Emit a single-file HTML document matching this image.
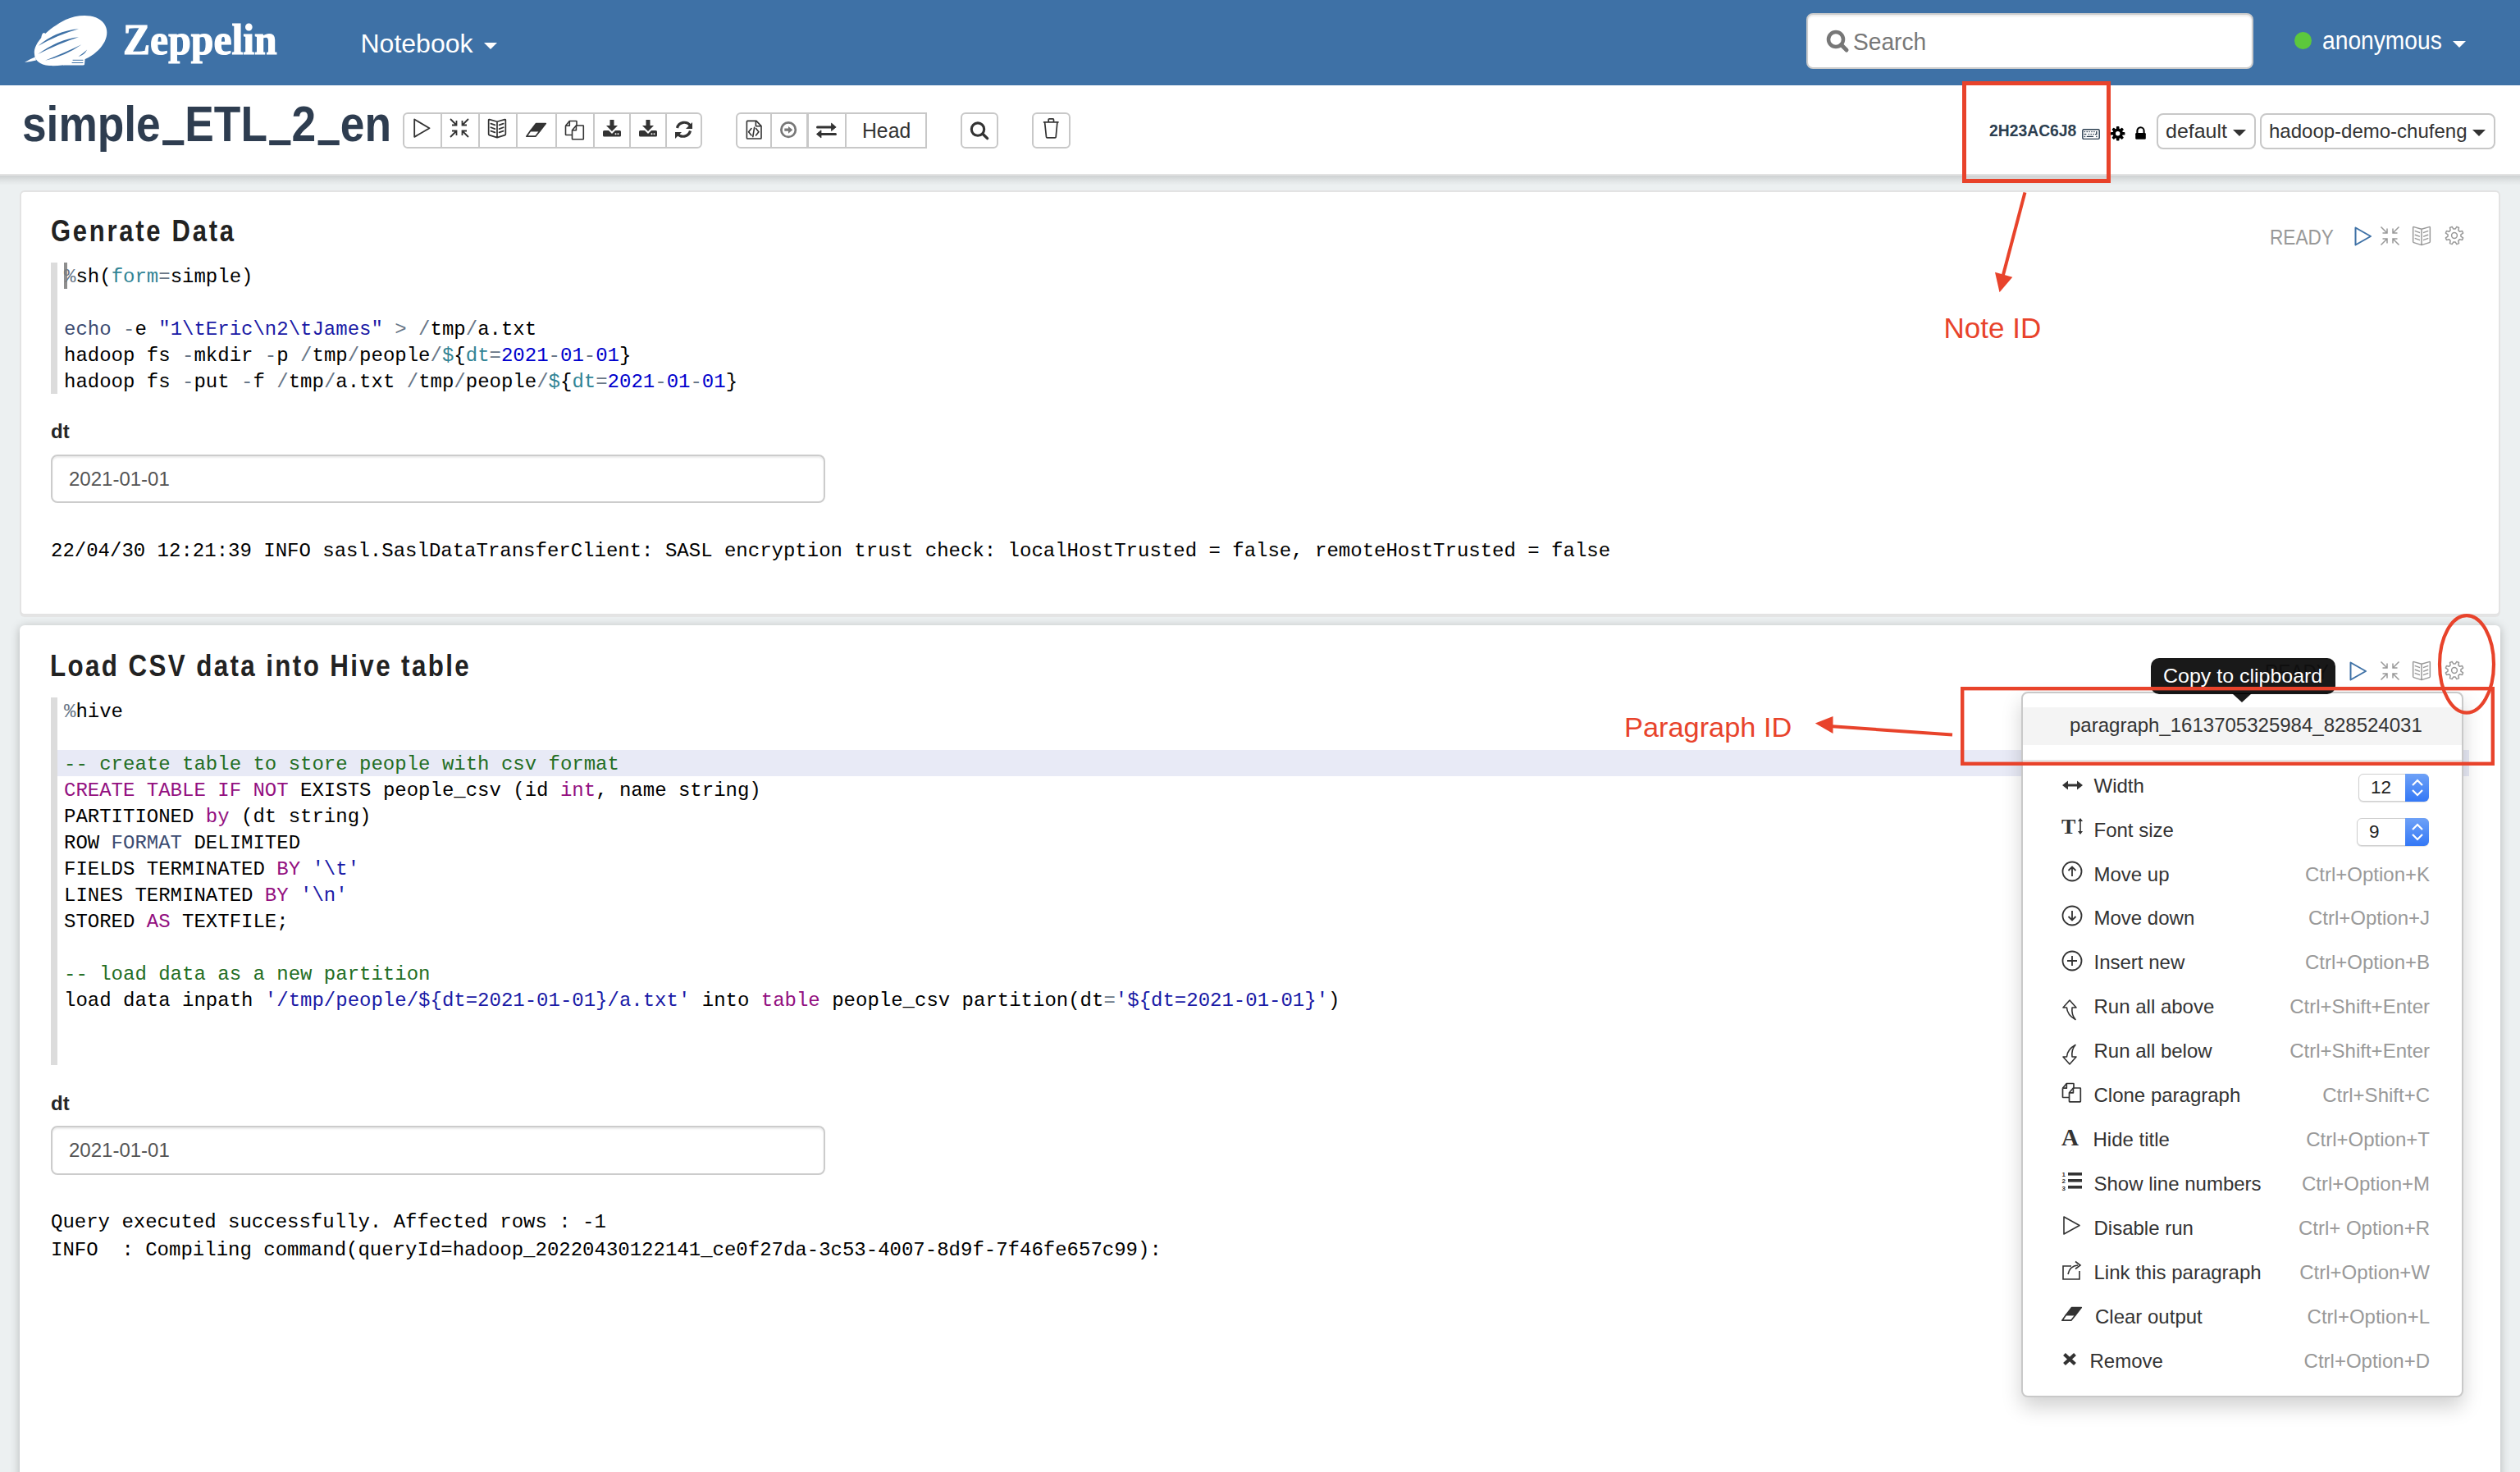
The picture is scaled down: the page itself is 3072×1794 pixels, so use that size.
<!DOCTYPE html>
<html><head><meta charset="utf-8"><title>Zeppelin</title>
<style>
html,body{margin:0;padding:0;}
body{width:3072px;height:1794px;overflow:hidden;position:relative;background:#ecf0f1;font-family:"Liberation Sans",sans-serif;}
.t{position:absolute;white-space:pre;}
.u{color:transparent;position:relative;}
.u::after{content:'';position:absolute;left:3px;right:1px;top:54px;height:6px;background:#2e3d50;}
svg{overflow:visible;}
</style></head><body>
<div style="position:absolute;left:0px;top:0px;width:3072px;height:104px;background:#3e71a6;"></div>
<svg style="position:absolute;left:0px;top:0px;" width="140" height="104" viewBox="0 0 140 104">
<g fill="#fff">
<path d="M42 66 C40 52 60 34 80 24 C95 17 118 16 127 29 C136 42 126 60 108 70 C95 77 75 81 60 80 C48 79 42 73 42 66 Z"/>
<path d="M30 76 Q36 72 43 69.5 L44 73.5 Q37 75 30 76 Z"/>
<path d="M50.3 46.5 Q50.5 41.5 53 40 Q55.5 40 56 42 Z"/>
<path d="M76 77 Q84 74 91 70.5 L102 70.3 Q104 70.5 103.5 73 L103 78.5 Q103 79.5 101 79.5 L77 79.5 Z"/>
</g>
<g fill="#3e71a6">
<path d="M46.5 56 Q67.5 37.6 96 35.2 Q70.5 42.2 46.5 56 Z"/>
<path d="M46.3 66 Q71.5 47.6 96 45.2 Q73.5 52.2 46.3 66 Z"/>
<path d="M55 73.8 Q79.5 64 99.5 54.3 Q79.5 68.5 55 73.8 Z"/>
<path d="M95.5 69 Q103.5 63.2 106.2 60.5 Q102.8 67.3 95.5 69 Z"/>
</g>
<g fill="none" stroke="#3e71a6" stroke-linecap="round">
<path d="M89 73.3 L101 73.3 M88 76.5 L101 76.5" stroke-width="1"/>
</g></svg>
<div class="t" style="left:150.0px;top:22.5px;font-size:52px;line-height:52px;color:#fff;font-family:'Liberation Serif', serif;font-weight:700;transform:scaleX(0.955);transform-origin:0 0;-webkit-text-stroke:1.2px #fff;">Zeppelin</div>
<div class="t" style="left:439.5px;top:37.4px;font-size:32px;line-height:32px;color:#fff;">Notebook</div>
<svg style="position:absolute;left:590px;top:52px;" width="16" height="8" viewBox="0 0 16 8"><path d="M0 0 H16 L8 8 Z" fill="#fff"/></svg>
<div style="position:absolute;left:2202px;top:16px;width:545px;height:68px;background:#fff;border:2px solid #ccc;box-sizing:border-box;border-radius:8px;box-shadow:inset 0 2px 2px rgba(0,0,0,.08);"></div>
<svg style="position:absolute;left:2226px;top:36px;" width="30" height="30" viewBox="0 0 30 30"><circle cx="12" cy="12" r="9" fill="none" stroke="#777" stroke-width="4.5"/><path d="M18.5 18.5 L25 25" stroke="#777" stroke-width="5" stroke-linecap="round"/></svg>
<div class="t" style="left:2259.0px;top:36.9px;font-size:29px;line-height:29px;color:#777;transform:scaleX(0.97);transform-origin:0 0;">Search</div>
<div style="position:absolute;left:2797px;top:39px;width:21px;height:21px;background:#5cc83c;border-radius:50%;"></div>
<div class="t" style="left:2831.0px;top:33.8px;font-size:31px;line-height:31px;color:#fff;transform:scaleX(0.91);transform-origin:0 0;">anonymous</div>
<svg style="position:absolute;left:2990px;top:50px;" width="16" height="8" viewBox="0 0 16 8"><path d="M0 0 H16 L8 8 Z" fill="#fff"/></svg>
<div style="position:absolute;left:0px;top:104px;width:3072px;height:108px;background:#fff;"></div>
<div style="position:absolute;left:0px;top:212px;width:3072px;height:2px;background:#e3e3e3;"></div>
<div style="position:absolute;left:0px;top:214px;width:3072px;height:12px;background:linear-gradient(rgba(0,0,0,.13),rgba(0,0,0,.04) 60%,rgba(0,0,0,0));"></div>
<div class="t" style="left:27.0px;top:120.9px;font-size:61px;line-height:61px;color:#2e3d50;font-weight:700;transform:scaleX(0.873);transform-origin:0 0;">simple<span class="u">_</span>ETL<span class="u">_</span>2<span class="u">_</span>en</div>
<div style="position:absolute;left:491px;top:137px;width:365px;height:44px;border:2px solid #c8c8c8;box-sizing:border-box;background:#fff;border-radius:6px 6px 6px 6px;"></div>
<div style="position:absolute;left:537px;top:137px;width:2px;height:44px;background:#c8c8c8;"></div>
<div style="position:absolute;left:583px;top:137px;width:2px;height:44px;background:#c8c8c8;"></div>
<div style="position:absolute;left:629px;top:137px;width:2px;height:44px;background:#c8c8c8;"></div>
<div style="position:absolute;left:677px;top:137px;width:2px;height:44px;background:#c8c8c8;"></div>
<div style="position:absolute;left:723px;top:137px;width:2px;height:44px;background:#c8c8c8;"></div>
<div style="position:absolute;left:767px;top:137px;width:2px;height:44px;background:#c8c8c8;"></div>
<div style="position:absolute;left:811px;top:137px;width:2px;height:44px;background:#c8c8c8;"></div>
<svg style="position:absolute;left:500px;top:141px;" width="30" height="32" viewBox="0 0 30 32"><path d="M5.2 4.5 L23.5 15.2 L5.2 25.9 Z" fill="none" stroke="#333" stroke-width="1.8" stroke-linejoin="round"/></svg>
<svg style="position:absolute;left:548px;top:144px;" width="24" height="24" viewBox="0 0 24 24"><g fill="none" stroke="#333" stroke-width="1.8" stroke-linecap="butt" stroke-linejoin="miter"><path d="M1 1 L8.5 8.5 M8.5 3 V8.5 H3"/><path d="M23 1 L15.5 8.5 M15.5 3 V8.5 H21"/><path d="M1 23 L8.5 15.5 M8.5 21 V15.5 H3"/><path d="M23 23 L15.5 15.5 M15.5 21 V15.5 H21"/></g></svg>
<svg style="position:absolute;left:594px;top:144px;" width="24" height="24" viewBox="0 0 24 24"><g fill="none" stroke="#333" stroke-width="1.7" stroke-linejoin="round" stroke-linecap="round"><path d="M12 4.3 L2.7 1.6 Q1.65 1.3 1.65 2.4 V19.6 Q1.65 20.4 2.4 20.6 L12 23.6 L21.6 20.6 Q22.35 20.4 22.35 19.6 V2.4 Q22.35 1.3 21.3 1.6 Z M12 4.3 V23.6"/><path d="M4.3 6.6 L9.4 8.4 M4.3 11.2 L9.4 13.1 M4.3 15.6 L9.4 17.4 M14.6 8.4 L19.7 6.6 M14.6 13.1 L19.7 11.2 M14.6 17.4 L19.7 15.6"/></g></svg>
<svg style="position:absolute;left:641px;top:149px;" width="26" height="19" viewBox="0 0 26 19"><path d="M12.5 1.5 H24.3 L17.3 10.4 H5.6 Z" fill="#333" stroke="#333" stroke-width="1.6" stroke-linejoin="round"/><path d="M5.6 10.4 H17.3 L11.8 17.2 H0.9 Z" fill="none" stroke="#333" stroke-width="1.7" stroke-linejoin="round"/></svg>
<svg style="position:absolute;left:688px;top:146px;" width="25" height="25" viewBox="0 0 25 25"><g fill="none" stroke="#333" stroke-width="1.6" stroke-linejoin="round"><path d="M1.5 7.2 L6.3 1.5 H14.5 Q15 1.5 15 2 V7.8"/><path d="M1.5 7.2 H6.3 V1.5"/><path d="M1.5 7.2 V18 Q1.5 18.5 2 18.5 H9.5"/><path d="M9.5 12.8 L14.4 7 H22.8 Q23.3 7 23.3 7.5 V23.3 Q23.3 23.8 22.8 23.8 H10 Q9.5 23.8 9.5 23.3 Z"/><path d="M9.5 12.8 H14.4 V7"/></g></svg>
<svg style="position:absolute;left:735px;top:146px;" width="22" height="21" viewBox="0 0 22 21"><path d="M8.5 0 H13.5 V7 H18 L11 14 L4 7 H8.5 Z" fill="#333"/><path d="M0 14.5 Q0 13 1.5 13 H7 L11 17 L15 13 H20.5 Q22 13 22 14.5 V19 Q22 20.5 20.5 20.5 H1.5 Q0 20.5 0 19 Z" fill="#333"/><circle cx="15.5" cy="17.3" r="1" fill="#fff"/><circle cx="18.5" cy="17.3" r="1" fill="#fff"/></svg>
<svg style="position:absolute;left:779px;top:146px;" width="22" height="21" viewBox="0 0 22 21"><path d="M8.5 0 H13.5 V7 H18 L11 14 L4 7 H8.5 Z" fill="#333"/><path d="M0 14.5 Q0 13 1.5 13 H7 L11 17 L15 13 H20.5 Q22 13 22 14.5 V19 Q22 20.5 20.5 20.5 H1.5 Q0 20.5 0 19 Z" fill="#333"/><circle cx="15.5" cy="17.3" r="1" fill="#fff"/><circle cx="18.5" cy="17.3" r="1" fill="#fff"/></svg>
<svg style="position:absolute;left:823px;top:147px;" width="21" height="23" viewBox="0 0 21 23"><g fill="none" stroke="#333" stroke-width="3.2"><path d="M2.5 9 A9 9 0 0 1 18.5 6"/><path d="M18.5 12.5 A9 9 0 0 1 2.5 15.5"/></g><path d="M21 2 V10 H13 Z" fill="#333"/><path d="M0 22 V14 H8 Z" fill="#333"/></svg>
<div style="position:absolute;left:897px;top:137px;width:233px;height:44px;border:2px solid #c8c8c8;box-sizing:border-box;background:#fff;border-radius:6px 0 0 6px;"></div>
<div style="position:absolute;left:939px;top:137px;width:2px;height:44px;background:#c8c8c8;"></div>
<div style="position:absolute;left:983px;top:137px;width:3px;height:44px;background:#c8c8c8;"></div>
<div style="position:absolute;left:1030px;top:137px;width:2px;height:44px;background:#c8c8c8;"></div>
<svg style="position:absolute;left:908px;top:145px;" width="22" height="26" viewBox="0 0 22 26"><path d="M2.4 3.3 Q2.4 2.4 3.3 2.4 H14 L20 8.6 V23.2 Q20 24 19.2 24 H3.3 Q2.4 24 2.4 23.2 Z" fill="none" stroke="#333" stroke-width="1.6" stroke-linejoin="round"/><path d="M13.4 2.6 V8.2 Q13.4 8.8 14 8.8 H19.8" fill="none" stroke="#333" stroke-width="1.6"/><path d="M8 11.6 L4.6 15.8 L8 20 M13.5 11.6 L16.9 15.8 L13.5 20 M11.6 10.3 L9.8 21.6" fill="none" stroke="#333" stroke-width="1.6" stroke-linecap="round"/></svg>
<svg style="position:absolute;left:950px;top:147px;" width="24" height="24" viewBox="0 0 24 24"><circle cx="11.1" cy="11.2" r="8.75" fill="none" stroke="#777" stroke-width="2.7"/><path d="M6.3 9.6 H11.4 V12.8 H6.3 Z M11 6.9 L16.3 11.2 L11 15.8 Z" fill="#777"/></svg>
<svg style="position:absolute;left:995px;top:150px;" width="25" height="19" viewBox="0 0 25 19"><path d="M1.5 5.1 H19.5 M23.5 13.5 H5.5" stroke="#333" stroke-width="3" stroke-linecap="round"/><path d="M18.5 0.1 L24.2 4.9 L18.5 9.6 Z" fill="#333" stroke="#333" stroke-width="0.8" stroke-linejoin="round"/><path d="M6 8.8 L0.4 13.4 L6 18 Z" fill="#333" stroke="#333" stroke-width="0.8" stroke-linejoin="round"/></svg>
<div class="t" style="left:1050.5px;top:146.8px;font-size:25px;line-height:25px;color:#333;transform:scaleX(0.99);transform-origin:0 0;">Head</div>
<div style="position:absolute;left:1171px;top:137px;width:46px;height:44px;border:2px solid #c8c8c8;box-sizing:border-box;background:#fff;border-radius:6px;"></div>
<svg style="position:absolute;left:1182px;top:147px;" width="24" height="24" viewBox="0 0 24 24"><circle cx="10" cy="10.6" r="7.7" fill="none" stroke="#333" stroke-width="3.1"/><path d="M16 16.2 L21.6 21.6" stroke="#333" stroke-width="3.4" stroke-linecap="round"/></svg>
<div style="position:absolute;left:1258px;top:137px;width:47px;height:44px;border:2px solid #c8c8c8;box-sizing:border-box;background:#fff;border-radius:6px;"></div>
<svg style="position:absolute;left:1270px;top:143px;" width="22" height="28" viewBox="0 0 22 28"><g fill="none" stroke="#333" stroke-width="1.7" stroke-linejoin="round"><path d="M1.9 5.9 H20.6"/><path d="M8.2 5.9 V2.9 Q8.2 1.9 9.2 1.9 H13.5 Q14.5 1.9 14.5 2.9 V5.9"/><path d="M3.6 5.9 L5.5 23.9 Q5.6 24.9 6.6 24.9 H16.1 Q17.1 24.9 17.2 23.9 L18.9 5.9"/></g></svg>
<div class="t" style="left:2425.0px;top:148.2px;font-size:21px;line-height:21px;color:#2c3e50;font-weight:700;transform:scaleX(0.92);transform-origin:0 0;">2H23AC6J8</div>
<svg style="position:absolute;left:2538px;top:157px;" width="22" height="13" viewBox="0 0 22 13"><rect x="0.8" y="0.8" width="20.4" height="11.6" rx="1.4" fill="none" stroke="#2c3e50" stroke-width="1.4"/><g fill="#2c3e50"><rect x="2.6" y="2.9" width="1.5" height="1.3"/><rect x="5.5" y="2.9" width="1.5" height="1.3"/><rect x="8.4" y="2.9" width="1.4" height="1.3"/><rect x="11.3" y="2.9" width="1.4" height="1.3"/><rect x="14.2" y="2.9" width="1.4" height="1.3"/><rect x="2.6" y="5.9" width="2.8" height="1.3"/><rect x="7.7" y="5.9" width="1.4" height="1.3"/><rect x="10.5" y="5.9" width="1.4" height="1.3"/><rect x="13.3" y="5.9" width="1.5" height="1.3"/><path d="M17.1 2.9 H18.5 V7.2 H15.9 V5.9 H17.1 Z"/><rect x="2.6" y="8.8" width="1.6" height="1.3"/><rect x="5.7" y="8.8" width="8.4" height="1.3" rx="0.6"/><rect x="17.1" y="8.8" width="1.4" height="1.3"/></g></svg>
<svg style="position:absolute;left:2573px;top:154px;" width="18" height="18" viewBox="0 0 18 18"><g transform="translate(8.7 8.8)"><circle r="6.2" fill="#000"/><rect x="-1.8" y="-8.7" width="3.6" height="4.5" rx="0.9" fill="#000" transform="rotate(0)"/><rect x="-1.8" y="-8.7" width="3.6" height="4.5" rx="0.9" fill="#000" transform="rotate(45)"/><rect x="-1.8" y="-8.7" width="3.6" height="4.5" rx="0.9" fill="#000" transform="rotate(90)"/><rect x="-1.8" y="-8.7" width="3.6" height="4.5" rx="0.9" fill="#000" transform="rotate(135)"/><rect x="-1.8" y="-8.7" width="3.6" height="4.5" rx="0.9" fill="#000" transform="rotate(180)"/><rect x="-1.8" y="-8.7" width="3.6" height="4.5" rx="0.9" fill="#000" transform="rotate(225)"/><rect x="-1.8" y="-8.7" width="3.6" height="4.5" rx="0.9" fill="#000" transform="rotate(270)"/><rect x="-1.8" y="-8.7" width="3.6" height="4.5" rx="0.9" fill="#000" transform="rotate(315)"/><circle r="2.7" fill="#fff"/></g></svg>
<svg style="position:absolute;left:2603px;top:154px;" width="14" height="16" viewBox="0 0 14 16"><path d="M2.4 8.5 V5.4 A4.1 4.1 0 0 1 10.6 5.4 V8.5" fill="none" stroke="#000" stroke-width="2.1"/><rect x="0.2" y="8" width="12.6" height="7.7" rx="1.2" fill="#000"/></svg>
<div style="position:absolute;left:2629px;top:138px;width:121px;height:44px;border:2px solid #c8c8c8;box-sizing:border-box;border-radius:8px;"></div>
<div class="t" style="left:2640.0px;top:148.2px;font-size:24px;line-height:24px;color:#333;transform:scaleX(1.04);transform-origin:0 0;">default</div>
<svg style="position:absolute;left:2722px;top:158px;" width="16" height="8" viewBox="0 0 16 8"><path d="M0 0 H16 L8 8 Z" fill="#333"/></svg>
<div style="position:absolute;left:2755px;top:138px;width:287px;height:44px;border:2px solid #c8c8c8;box-sizing:border-box;border-radius:8px;"></div>
<div class="t" style="left:2766.0px;top:147.7px;font-size:24px;line-height:24px;color:#333;">hadoop-demo-chufeng</div>
<svg style="position:absolute;left:3014px;top:158px;" width="16" height="8" viewBox="0 0 16 8"><path d="M0 0 H16 L8 8 Z" fill="#333"/></svg>
<div style="position:absolute;left:24px;top:232px;width:3024px;height:518px;background:#fff;border:2px solid #e3e3e3;box-sizing:border-box;border-radius:6px;box-shadow:0 2px 0 #e4e4e4;"></div>
<div class="t" style="left:61.5px;top:263.8px;font-size:36px;line-height:36px;color:#222;font-weight:700;transform:scaleX(0.86);transform-origin:0 0;letter-spacing:3.2px;">Genrate Data</div>
<div class="t" style="left:2767.0px;top:276.0px;font-size:26px;line-height:26px;color:#999;transform:scaleX(0.87);transform-origin:0 0;">READY</div>
<svg style="position:absolute;left:2868px;top:275px;" width="26" height="26" viewBox="0 0 26 26"><path d="M3.5 2.5 L22 13 L3.5 23.5 Z" fill="none" stroke="#3e71a6" stroke-width="2" stroke-linejoin="round"/></svg>
<svg style="position:absolute;left:2900.5px;top:275px;" width="25" height="25" viewBox="-0.5 -0.5 25 25"><g fill="none" stroke="#999" stroke-width="1.5" stroke-linecap="butt" stroke-linejoin="miter"><path d="M1 1 L8.5 8.5 M8.5 3 V8.5 H3"/><path d="M23 1 L15.5 8.5 M15.5 3 V8.5 H21"/><path d="M1 23 L8.5 15.5 M8.5 21 V15.5 H3"/><path d="M23 23 L15.5 15.5 M15.5 21 V15.5 H21"/></g></svg>
<svg style="position:absolute;left:2940px;top:275px;" width="24" height="24" viewBox="0 0 24 24"><g fill="none" stroke="#999" stroke-width="1.5" stroke-linejoin="round" stroke-linecap="round"><path d="M12 4.3 L2.7 1.6 Q1.65 1.3 1.65 2.4 V19.6 Q1.65 20.4 2.4 20.6 L12 23.6 L21.6 20.6 Q22.35 20.4 22.35 19.6 V2.4 Q22.35 1.3 21.3 1.6 Z M12 4.3 V23.6"/><path d="M4.3 6.6 L9.4 8.4 M4.3 11.2 L9.4 13.1 M4.3 15.6 L9.4 17.4 M14.6 8.4 L19.7 6.6 M14.6 13.1 L19.7 11.2 M14.6 17.4 L19.7 15.6"/></g></svg>
<svg style="position:absolute;left:2980px;top:275px;" width="24" height="24" viewBox="0 0 24 24"><path d="M13.06 4.07 L14.86 1.38 L17.49 2.47 L16.86 5.64 L18.36 7.14 L21.53 6.51 L22.62 9.14 L19.93 10.94 L19.93 13.06 L22.62 14.86 L21.53 17.49 L18.36 16.86 L16.86 18.36 L17.49 21.53 L14.86 22.62 L13.06 19.93 L10.94 19.93 L9.14 22.62 L6.51 21.53 L7.14 18.36 L5.64 16.86 L2.47 17.49 L1.38 14.86 L4.07 13.06 L4.07 10.94 L1.38 9.14 L2.47 6.51 L5.64 7.14 L7.14 5.64 L6.51 2.47 L9.14 1.38 L10.94 4.07 Z" fill="none" stroke="#999" stroke-width="1.5" stroke-linejoin="round"/><circle cx="12" cy="12" r="3.4" fill="none" stroke="#999" stroke-width="1.5"/></svg>
<div style="position:absolute;left:62px;top:320px;width:8px;height:160px;background:#dcdcdc;"></div>
<div class="t" style="left:78.0px;top:325.6px;font-size:24px;line-height:24px;color:#000;font-family:'Liberation Mono', monospace;"><span style="color:#687687">%</span>sh(<span style="color:#318495">form</span><span style="color:#687687">=</span>simple)</div>
<div class="t" style="left:78.0px;top:357.6px;font-size:24px;line-height:24px;color:#000;font-family:'Liberation Mono', monospace;"></div>
<div class="t" style="left:78.0px;top:389.6px;font-size:24px;line-height:24px;color:#000;font-family:'Liberation Mono', monospace;"><span style="color:#3c4c72">echo</span> <span style="color:#687687">-</span>e <span style="color:#1a1aa6">&quot;1\tEric\n2\tJames&quot;</span> <span style="color:#687687">&gt;</span> <span style="color:#687687">/</span>tmp<span style="color:#687687">/</span>a.txt</div>
<div class="t" style="left:78.0px;top:421.6px;font-size:24px;line-height:24px;color:#000;font-family:'Liberation Mono', monospace;">hadoop fs <span style="color:#687687">-</span>mkdir <span style="color:#687687">-</span>p <span style="color:#687687">/</span>tmp<span style="color:#687687">/</span>people<span style="color:#687687">/</span><span style="color:#318495">$</span>{<span style="color:#318495">dt</span><span style="color:#687687">=</span><span style="color:#0000cd">2021</span><span style="color:#687687">-</span><span style="color:#0000cd">01</span><span style="color:#687687">-</span><span style="color:#0000cd">01</span>}</div>
<div class="t" style="left:78.0px;top:453.6px;font-size:24px;line-height:24px;color:#000;font-family:'Liberation Mono', monospace;">hadoop fs <span style="color:#687687">-</span>put <span style="color:#687687">-</span>f <span style="color:#687687">/</span>tmp<span style="color:#687687">/</span>a.txt <span style="color:#687687">/</span>tmp<span style="color:#687687">/</span>people<span style="color:#687687">/</span><span style="color:#318495">$</span>{<span style="color:#318495">dt</span><span style="color:#687687">=</span><span style="color:#0000cd">2021</span><span style="color:#687687">-</span><span style="color:#0000cd">01</span><span style="color:#687687">-</span><span style="color:#0000cd">01</span>}</div>
<div style="position:absolute;left:78px;top:320px;width:4px;height:32px;background:#7a7a7a;opacity:.85;"></div>
<div class="t" style="left:62.0px;top:514.2px;font-size:24px;line-height:24px;color:#262626;font-weight:700;">dt</div>
<div style="position:absolute;left:62px;top:554px;width:944px;height:59px;border:2px solid #ccc;box-sizing:border-box;border-radius:8px;background:#fff;box-shadow:inset 0 2px 2px rgba(0,0,0,.075);"></div>
<div class="t" style="left:84.0px;top:571.7px;font-size:24px;line-height:24px;color:#555;">2021-01-01</div>
<div class="t" style="left:62.0px;top:660.1px;font-size:24px;line-height:24px;color:#000;font-family:'Liberation Mono', monospace;">22/04/30 12:21:39 INFO sasl.SaslDataTransferClient: SASL encryption trust check: localHostTrusted = false, remoteHostTrusted = false</div>
<div style="position:absolute;left:24px;top:762px;width:3024px;height:1100px;background:#fff;border-radius:6px;box-shadow:0 2px 12px rgba(0,0,0,.25);"></div>
<div class="t" style="left:60.5px;top:793.8px;font-size:36px;line-height:36px;color:#222;font-weight:700;transform:scaleX(0.87);transform-origin:0 0;letter-spacing:2.75px;">Load CSV data into Hive table</div>
<div style="position:absolute;left:62px;top:850px;width:8px;height:448px;background:#dcdcdc;"></div>
<div style="position:absolute;left:70px;top:914px;width:2940px;height:32px;background:#e8eaf6;"></div>
<div class="t" style="left:78.0px;top:855.6px;font-size:24px;line-height:24px;color:#000;font-family:'Liberation Mono', monospace;"><span style="color:#687687">%</span>hive</div>
<div class="t" style="left:78.0px;top:887.6px;font-size:24px;line-height:24px;color:#000;font-family:'Liberation Mono', monospace;"></div>
<div class="t" style="left:78.0px;top:919.6px;font-size:24px;line-height:24px;color:#000;font-family:'Liberation Mono', monospace;"><span style="color:#236e24">-- create table to store people with csv format</span></div>
<div class="t" style="left:78.0px;top:951.6px;font-size:24px;line-height:24px;color:#000;font-family:'Liberation Mono', monospace;"><span style="color:#930f80">CREATE TABLE IF NOT</span> EXISTS people_csv (id <span style="color:#930f80">int</span>, name string)</div>
<div class="t" style="left:78.0px;top:983.6px;font-size:24px;line-height:24px;color:#000;font-family:'Liberation Mono', monospace;">PARTITIONED <span style="color:#930f80">by</span> (dt string)</div>
<div class="t" style="left:78.0px;top:1015.6px;font-size:24px;line-height:24px;color:#000;font-family:'Liberation Mono', monospace;">ROW <span style="color:#3c4c72">FORMAT</span> DELIMITED</div>
<div class="t" style="left:78.0px;top:1047.6px;font-size:24px;line-height:24px;color:#000;font-family:'Liberation Mono', monospace;">FIELDS TERMINATED <span style="color:#930f80">BY</span> <span style="color:#1a1aa6">&#x27;\t&#x27;</span></div>
<div class="t" style="left:78.0px;top:1079.6px;font-size:24px;line-height:24px;color:#000;font-family:'Liberation Mono', monospace;">LINES TERMINATED <span style="color:#930f80">BY</span> <span style="color:#1a1aa6">&#x27;\n&#x27;</span></div>
<div class="t" style="left:78.0px;top:1111.6px;font-size:24px;line-height:24px;color:#000;font-family:'Liberation Mono', monospace;">STORED <span style="color:#930f80">AS</span> TEXTFILE;</div>
<div class="t" style="left:78.0px;top:1143.6px;font-size:24px;line-height:24px;color:#000;font-family:'Liberation Mono', monospace;"></div>
<div class="t" style="left:78.0px;top:1175.6px;font-size:24px;line-height:24px;color:#000;font-family:'Liberation Mono', monospace;"><span style="color:#236e24">-- load data as a new partition</span></div>
<div class="t" style="left:78.0px;top:1207.6px;font-size:24px;line-height:24px;color:#000;font-family:'Liberation Mono', monospace;">load data inpath <span style="color:#1a1aa6">&#x27;/tmp/people/${dt=2021-01-01}/a.txt&#x27;</span> into <span style="color:#930f80">table</span> people_csv partition(dt<span style="color:#687687">=</span><span style="color:#1a1aa6">&#x27;${dt=2021-01-01}&#x27;</span>)</div>
<div class="t" style="left:62.0px;top:1332.7px;font-size:24px;line-height:24px;color:#262626;font-weight:700;">dt</div>
<div style="position:absolute;left:62px;top:1372px;width:944px;height:60px;border:2px solid #ccc;box-sizing:border-box;border-radius:8px;background:#fff;box-shadow:inset 0 2px 2px rgba(0,0,0,.075);"></div>
<div class="t" style="left:84.0px;top:1390.0px;font-size:24px;line-height:24px;color:#555;">2021-01-01</div>
<div class="t" style="left:62.0px;top:1478.1px;font-size:24px;line-height:24px;color:#000;font-family:'Liberation Mono', monospace;">Query executed successfully. Affected rows : -1</div>
<div class="t" style="left:62.0px;top:1512.1px;font-size:24px;line-height:24px;color:#000;font-family:'Liberation Mono', monospace;">INFO  : Compiling command(queryId=hadoop_20220430122141_ce0f27da-3c53-4007-8d9f-7f46fe657c99):</div>
<svg style="position:absolute;left:2862px;top:805px;" width="26" height="26" viewBox="0 0 26 26"><path d="M3.5 2.5 L22 13 L3.5 23.5 Z" fill="none" stroke="#3e71a6" stroke-width="2" stroke-linejoin="round"/></svg>
<svg style="position:absolute;left:2900.5px;top:805px;" width="25" height="25" viewBox="-0.5 -0.5 25 25"><g fill="none" stroke="#999" stroke-width="1.5" stroke-linecap="butt" stroke-linejoin="miter"><path d="M1 1 L8.5 8.5 M8.5 3 V8.5 H3"/><path d="M23 1 L15.5 8.5 M15.5 3 V8.5 H21"/><path d="M1 23 L8.5 15.5 M8.5 21 V15.5 H3"/><path d="M23 23 L15.5 15.5 M15.5 21 V15.5 H21"/></g></svg>
<svg style="position:absolute;left:2940px;top:805px;" width="24" height="24" viewBox="0 0 24 24"><g fill="none" stroke="#999" stroke-width="1.5" stroke-linejoin="round" stroke-linecap="round"><path d="M12 4.3 L2.7 1.6 Q1.65 1.3 1.65 2.4 V19.6 Q1.65 20.4 2.4 20.6 L12 23.6 L21.6 20.6 Q22.35 20.4 22.35 19.6 V2.4 Q22.35 1.3 21.3 1.6 Z M12 4.3 V23.6"/><path d="M4.3 6.6 L9.4 8.4 M4.3 11.2 L9.4 13.1 M4.3 15.6 L9.4 17.4 M14.6 8.4 L19.7 6.6 M14.6 13.1 L19.7 11.2 M14.6 17.4 L19.7 15.6"/></g></svg>
<svg style="position:absolute;left:2980px;top:805px;" width="24" height="24" viewBox="0 0 24 24"><path d="M13.06 4.07 L14.86 1.38 L17.49 2.47 L16.86 5.64 L18.36 7.14 L21.53 6.51 L22.62 9.14 L19.93 10.94 L19.93 13.06 L22.62 14.86 L21.53 17.49 L18.36 16.86 L16.86 18.36 L17.49 21.53 L14.86 22.62 L13.06 19.93 L10.94 19.93 L9.14 22.62 L6.51 21.53 L7.14 18.36 L5.64 16.86 L2.47 17.49 L1.38 14.86 L4.07 13.06 L4.07 10.94 L1.38 9.14 L2.47 6.51 L5.64 7.14 L7.14 5.64 L6.51 2.47 L9.14 1.38 L10.94 4.07 Z" fill="none" stroke="#999" stroke-width="1.5" stroke-linejoin="round"/><circle cx="12" cy="12" r="3.4" fill="none" stroke="#999" stroke-width="1.5"/></svg>
<div class="t" style="left:2760.5px;top:806.0px;font-size:26px;line-height:26px;color:#999;transform:scaleX(0.87);transform-origin:0 0;">READY</div>
<div style="position:absolute;left:2464px;top:843px;width:539px;height:860px;background:#fff;border:2px solid #c9c9c9;box-sizing:border-box;border-radius:8px;box-shadow:0 12px 24px rgba(0,0,0,.18);"></div>
<div style="position:absolute;left:2466px;top:862px;width:535px;height:46px;background:#f4f4f4;"></div>
<div style="position:absolute;left:2466px;top:926px;width:535px;height:2px;background:#e6e6e6;"></div>
<div class="t" style="left:2523.0px;top:871.7px;font-size:24px;line-height:24px;color:#333;transform:scaleX(1.0);transform-origin:0 0;">paragraph_1613705325984_828524031</div>
<div class="t" style="left:2552.5px;top:945.7px;font-size:24px;line-height:24px;color:#333;">Width</div>
<div class="t" style="left:2552.5px;top:999.6px;font-size:24px;line-height:24px;color:#333;">Font size</div>
<div class="t" style="left:2552.5px;top:1053.5px;font-size:24px;line-height:24px;color:#333;">Move up</div>
<div class="t" style="left:2562.0px;top:1053.5px;font-size:24px;line-height:24px;color:#999;width:400px;text-align:right;">Ctrl+Option+K</div>
<div class="t" style="left:2552.5px;top:1107.4px;font-size:24px;line-height:24px;color:#333;">Move down</div>
<div class="t" style="left:2562.0px;top:1107.4px;font-size:24px;line-height:24px;color:#999;width:400px;text-align:right;">Ctrl+Option+J</div>
<div class="t" style="left:2552.5px;top:1161.4px;font-size:24px;line-height:24px;color:#333;">Insert new</div>
<div class="t" style="left:2562.0px;top:1161.4px;font-size:24px;line-height:24px;color:#999;width:400px;text-align:right;">Ctrl+Option+B</div>
<div class="t" style="left:2552.5px;top:1215.3px;font-size:24px;line-height:24px;color:#333;">Run all above</div>
<div class="t" style="left:2562.0px;top:1215.3px;font-size:24px;line-height:24px;color:#999;width:400px;text-align:right;">Ctrl+Shift+Enter</div>
<div class="t" style="left:2552.5px;top:1269.2px;font-size:24px;line-height:24px;color:#333;">Run all below</div>
<div class="t" style="left:2562.0px;top:1269.2px;font-size:24px;line-height:24px;color:#999;width:400px;text-align:right;">Ctrl+Shift+Enter</div>
<div class="t" style="left:2552.5px;top:1323.1px;font-size:24px;line-height:24px;color:#333;">Clone paragraph</div>
<div class="t" style="left:2562.0px;top:1323.1px;font-size:24px;line-height:24px;color:#999;width:400px;text-align:right;">Ctrl+Shift+C</div>
<div class="t" style="left:2551.5px;top:1377.0px;font-size:24px;line-height:24px;color:#333;">Hide title</div>
<div class="t" style="left:2562.0px;top:1377.0px;font-size:24px;line-height:24px;color:#999;width:400px;text-align:right;">Ctrl+Option+T</div>
<div class="t" style="left:2552.5px;top:1431.0px;font-size:24px;line-height:24px;color:#333;">Show line numbers</div>
<div class="t" style="left:2562.0px;top:1431.0px;font-size:24px;line-height:24px;color:#999;width:400px;text-align:right;">Ctrl+Option+M</div>
<div class="t" style="left:2552.5px;top:1484.9px;font-size:24px;line-height:24px;color:#333;">Disable run</div>
<div class="t" style="left:2562.0px;top:1484.9px;font-size:24px;line-height:24px;color:#999;width:400px;text-align:right;">Ctrl+ Option+R</div>
<div class="t" style="left:2552.5px;top:1538.8px;font-size:24px;line-height:24px;color:#333;">Link this paragraph</div>
<div class="t" style="left:2562.0px;top:1538.8px;font-size:24px;line-height:24px;color:#999;width:400px;text-align:right;">Ctrl+Option+W</div>
<div class="t" style="left:2554.0px;top:1592.7px;font-size:24px;line-height:24px;color:#333;">Clear output</div>
<div class="t" style="left:2562.0px;top:1592.7px;font-size:24px;line-height:24px;color:#999;width:400px;text-align:right;">Ctrl+Option+L</div>
<div class="t" style="left:2547.5px;top:1646.6px;font-size:24px;line-height:24px;color:#333;">Remove</div>
<div class="t" style="left:2562.0px;top:1646.6px;font-size:24px;line-height:24px;color:#999;width:400px;text-align:right;">Ctrl+Option+D</div>
<div style="position:absolute;left:2875px;top:943px;width:86px;height:34px;background:#fff;border:1px solid #cfcfcf;box-sizing:border-box;border-radius:6px;box-shadow:0 1px 1px rgba(0,0,0,.12);"></div>
<div style="position:absolute;left:2932px;top:943px;width:29px;height:34px;background:linear-gradient(#6ea1f7,#3478f6);border-radius:0 6px 6px 0;"></div>
<svg style="position:absolute;left:2938px;top:949px;" width="18" height="22" viewBox="0 0 18 22"><path d="M3 8 L9 2 L15 8 M3 14 L9 20 L15 14" fill="none" stroke="#fff" stroke-width="2.2"/></svg>
<div class="t" style="left:2890.0px;top:948.9px;font-size:22.5px;line-height:22.5px;color:#222;">12</div>
<div style="position:absolute;left:2873px;top:997px;width:88px;height:34px;background:#fff;border:1px solid #cfcfcf;box-sizing:border-box;border-radius:6px;box-shadow:0 1px 1px rgba(0,0,0,.12);"></div>
<div style="position:absolute;left:2932px;top:997px;width:29px;height:34px;background:linear-gradient(#6ea1f7,#3478f6);border-radius:0 6px 6px 0;"></div>
<svg style="position:absolute;left:2938px;top:1003px;" width="18" height="22" viewBox="0 0 18 22"><path d="M3 8 L9 2 L15 8 M3 14 L9 20 L15 14" fill="none" stroke="#fff" stroke-width="2.2"/></svg>
<div class="t" style="left:2888.0px;top:1002.9px;font-size:22.5px;line-height:22.5px;color:#222;">9</div>
<svg style="position:absolute;left:2514px;top:950px;" width="25" height="14" viewBox="0 0 25 14"><path d="M4 7 H21" stroke="#333" stroke-width="3"/><path d="M0 7 L7 1.5 V12.5 Z M25 7 L18 1.5 V12.5 Z" fill="#333"/></svg>
<svg style="position:absolute;left:2513px;top:996px;" width="27" height="23" viewBox="0 0 27 23"><text x="0" y="20" font-family="Liberation Serif" font-weight="700" font-size="26" fill="#333">T</text><path d="M23 2 V20" stroke="#333" stroke-width="1.6"/><path d="M20 5 L23 1 L26 5 Z M20 17 L23 21 L26 17 Z" fill="#333"/></svg>
<svg style="position:absolute;left:2513px;top:1049px;" width="26" height="26" viewBox="0 0 26 26"><circle cx="13" cy="13" r="11.5" fill="none" stroke="#333" stroke-width="1.8"/><path d="M13 19 V7.5 M8.5 12 L13 7.5 L17.5 12" fill="none" stroke="#333" stroke-width="1.8"/></svg>
<svg style="position:absolute;left:2513px;top:1103px;" width="26" height="26" viewBox="0 0 26 26"><circle cx="13" cy="13" r="11.5" fill="none" stroke="#333" stroke-width="1.8"/><path d="M13 7 V18.5 M8.5 14 L13 18.5 L17.5 14" fill="none" stroke="#333" stroke-width="1.8"/></svg>
<svg style="position:absolute;left:2513px;top:1157.5px;" width="26" height="26" viewBox="0 0 26 26"><circle cx="13" cy="13" r="11.5" fill="none" stroke="#333" stroke-width="1.8"/><path d="M13 7 V19 M7 13 H19" fill="none" stroke="#333" stroke-width="1.8"/></svg>
<svg style="position:absolute;left:2513px;top:1218px;" width="24" height="26" viewBox="0 0 24 26"><path d="M10 1 L2 10 H6.5 Q7 19 17 24.5 Q12 19 13 10 H18 Z" fill="none" stroke="#333" stroke-width="1.6" stroke-linejoin="round"/></svg>
<svg style="position:absolute;left:2513px;top:1272px;" width="24" height="26" viewBox="0 0 24 26"><path d="M10 25 L2 16 H6.5 Q7 7 17 1.5 Q12 7 13 16 H18 Z" fill="none" stroke="#333" stroke-width="1.6" stroke-linejoin="round"/></svg>
<svg style="position:absolute;left:2513px;top:1319px;" width="26" height="26" viewBox="0 0 26 26"><g fill="none" stroke="#333" stroke-width="1.7" stroke-linejoin="round"><path d="M1.5 7.2 L6.3 1.5 H14.5 Q15 1.5 15 2 V7.8"/><path d="M1.5 7.2 H6.3 V1.5"/><path d="M1.5 7.2 V18 Q1.5 18.5 2 18.5 H9.5"/><path d="M9.5 12.8 L14.4 7 H22.8 Q23.3 7 23.3 7.5 V23.3 Q23.3 23.8 22.8 23.8 H10 Q9.5 23.8 9.5 23.3 Z"/><path d="M9.5 12.8 H14.4 V7"/></g></svg>
<svg style="position:absolute;left:2513px;top:1374px;" width="26" height="24" viewBox="0 0 26 24"><text x="0" y="22" font-family="Liberation Serif" font-weight="700" font-size="29" fill="#333">A</text></svg>
<svg style="position:absolute;left:2513px;top:1426px;" width="26" height="26" viewBox="0 0 26 26"><g fill="#333"><rect x="8" y="3" width="17" height="3.6"/><rect x="8" y="11" width="17" height="3.6"/><rect x="8" y="19" width="17" height="3.6"/></g><text x="0.5" y="8" font-family="Liberation Sans" font-size="8" font-weight="700" fill="#333">1</text><text x="0.5" y="16" font-family="Liberation Sans" font-size="8" font-weight="700" fill="#333">2</text><text x="0.5" y="25" font-family="Liberation Sans" font-size="8" font-weight="700" fill="#333">3</text></svg>
<svg style="position:absolute;left:2514px;top:1481px;" width="24" height="26" viewBox="0 0 24 26"><path d="M2 2 L21 12.5 L2 23 Z" fill="none" stroke="#333" stroke-width="1.6" stroke-linejoin="round"/></svg>
<svg style="position:absolute;left:2513px;top:1535px;" width="26" height="26" viewBox="0 0 26 26"><path d="M12 8 H2 V24 H22 V14" fill="none" stroke="#333" stroke-width="1.6"/><path d="M8 18 Q10 8 20 7" fill="none" stroke="#333" stroke-width="1.6"/><path d="M17 2.5 L23 7 L17 11.5" fill="none" stroke="#333" stroke-width="1.6"/></svg>
<svg style="position:absolute;left:2513px;top:1592px;" width="27" height="19" viewBox="0 0 27 19"><path d="M12.5 1.5 H24.3 L17.3 10.4 H5.6 Z" fill="#333" stroke="#333" stroke-width="1.6" stroke-linejoin="round"/><path d="M5.6 10.4 H17.3 L11.8 17.2 H0.9 Z" fill="none" stroke="#333" stroke-width="1.7" stroke-linejoin="round"/></svg>
<svg style="position:absolute;left:2514px;top:1648px;" width="18" height="17" viewBox="0 0 18 17"><path d="M2.5 2.5 L15.5 14.5 M15.5 2.5 L2.5 14.5" stroke="#333" stroke-width="4.2"/></svg>
<div style="position:absolute;left:2622px;top:802px;width:225px;height:44px;background:rgba(0,0,0,.9);border-radius:10px;"></div>
<svg style="position:absolute;left:2721px;top:845px;" width="24" height="11" viewBox="0 0 24 11"><path d="M0 0 H24 L12 11 Z" fill="rgba(0,0,0,.9)"/></svg>
<div class="t" style="left:2637.0px;top:811.7px;font-size:24px;line-height:24px;color:#fff;transform:scaleX(1.04);transform-origin:0 0;">Copy to clipboard</div>
<div style="position:absolute;left:2392px;top:99px;width:181px;height:123.5px;border:5px solid #e8432b;box-sizing:border-box;"></div>
<svg style="position:absolute;left:2420px;top:225px;" width="60" height="140" viewBox="0 0 60 140"><path d="M48.5 9.5 L22 110" stroke="#e8432b" stroke-width="4"/><path d="M12 106.7 L33.3 112.7 L17.5 131.2 Z" fill="#e8432b"/></svg>
<div class="t" style="left:2369.5px;top:381.9px;font-size:35px;line-height:35px;color:#e8432b;transform:scaleX(1.0);transform-origin:0 0;">Note ID</div>
<svg style="position:absolute;left:2390px;top:837px;" width="651" height="96" viewBox="0 0 651 96"><rect x="2.2" y="2.2" width="646.6" height="91.6" fill="none" stroke="#e8432b" stroke-width="4.4"/></svg>
<svg style="position:absolute;left:2200px;top:860px;" width="190" height="50" viewBox="0 0 190 50"><path d="M180 35.5 L30 25" stroke="#e8432b" stroke-width="4"/><path d="M12.8 21.5 L34.5 13 L34.5 34 Z" fill="#e8432b"/></svg>
<div class="t" style="left:1980.0px;top:869.2px;font-size:34px;line-height:34px;color:#e8432b;transform:scaleX(1.01);transform-origin:0 0;">Paragraph ID</div>
<svg style="position:absolute;left:2965px;top:745px;" width="84" height="130" viewBox="0 0 84 130"><ellipse cx="42" cy="64.4" rx="33" ry="59.3" fill="none" stroke="#e8432b" stroke-width="4.2"/></svg>
</body></html>
